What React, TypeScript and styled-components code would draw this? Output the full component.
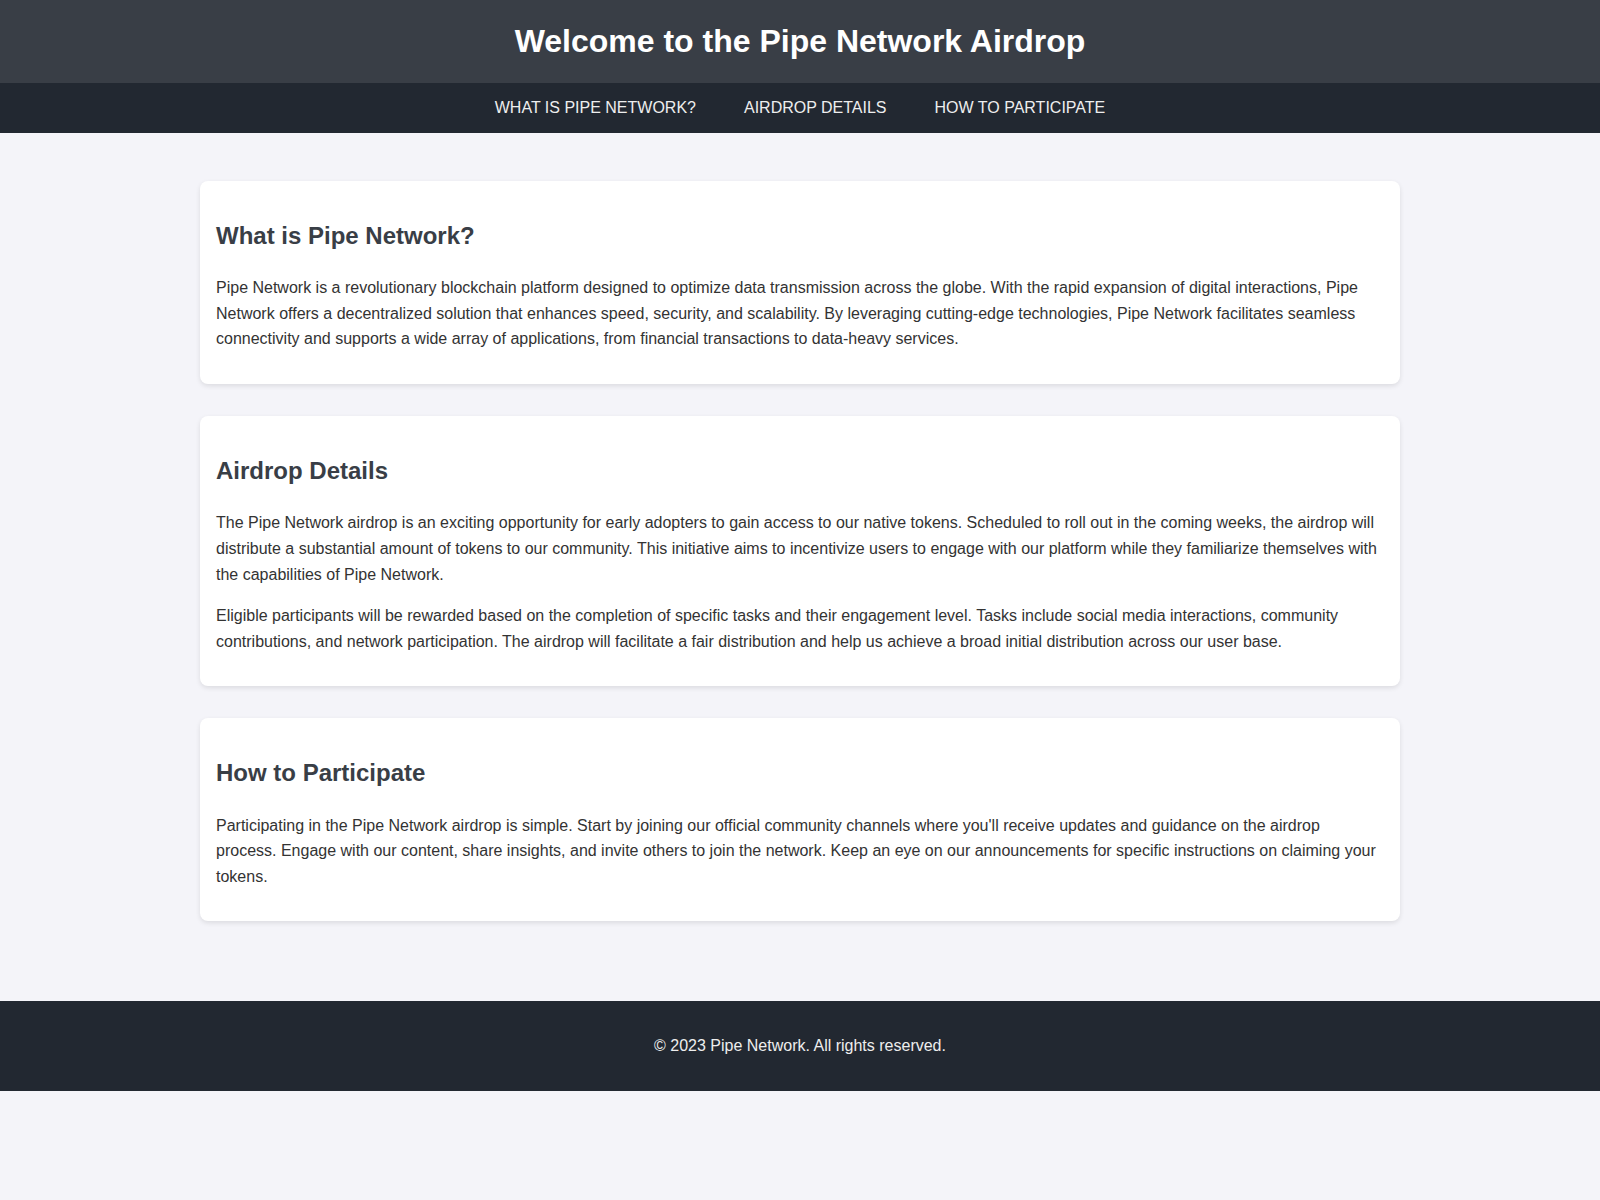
import React from "react";
import styled, { createGlobalStyle } from "styled-components";

const Global = createGlobalStyle`
  html, body {
    margin: 0;
    padding: 0;
    background: #f4f4f9;
    font-family: Arial, "Liberation Sans", Helvetica, sans-serif;
    line-height: 1.6;
    color: #333;
  }
  * { box-sizing: border-box; }
`;

const Header = styled.header`
  background: #393e46;
  color: #fff;
  padding: 16px 0;
  text-align: center;
`;

const Title = styled.h1`
  margin: 0;
  font-size: 32px;
  font-weight: bold;
  line-height: 1.6;
`;

const Nav = styled.nav`
  background: #222831;
  padding: 12px 0;
  display: flex;
  justify-content: center;
  gap: 48px;
`;

const NavLink = styled.a`
  color: #eeeeee;
  text-decoration: none;
  text-transform: uppercase;
  font-size: 16px;
  line-height: 25.6px;
`;

const Main = styled.main`
  max-width: 1200px;
  margin: 0 auto;
  padding: 48px 0 80px;
  display: flex;
  flex-direction: column;
  gap: 32px;
`;

const Card = styled.section`
  background: #fff;
  border-radius: 8px;
  padding: 16px;
  box-shadow: 0 2px 5px rgba(0, 0, 0, 0.1);
`;

const CardTitle = styled.h2`
  margin: 20px 0 20px;
  font-size: 24px;
  line-height: 1.6;
  color: #393e46;
`;

const Para = styled.p`
  margin: 16px 0;
  font-size: 16px;
  color: #333;
`;

const Footer = styled.footer`
  background: #222831;
  color: #eeeeee;
  text-align: center;
  padding: 32px 0;
  font-size: 16px;
`;

const sections = [
  {
    id: "what",
    title: "What is Pipe Network?",
    paras: [
      "Pipe Network is a revolutionary blockchain platform designed to optimize data transmission across the globe. With the rapid expansion of digital interactions, Pipe Network offers a decentralized solution that enhances speed, security, and scalability. By leveraging cutting-edge technologies, Pipe Network facilitates seamless connectivity and supports a wide array of applications, from financial transactions to data-heavy services.",
    ],
  },
  {
    id: "airdrop",
    title: "Airdrop Details",
    paras: [
      "The Pipe Network airdrop is an exciting opportunity for early adopters to gain access to our native tokens. Scheduled to roll out in the coming weeks, the airdrop will distribute a substantial amount of tokens to our community. This initiative aims to incentivize users to engage with our platform while they familiarize themselves with the capabilities of Pipe Network.",
      "Eligible participants will be rewarded based on the completion of specific tasks and their engagement level. Tasks include social media interactions, community contributions, and network participation. The airdrop will facilitate a fair distribution and help us achieve a broad initial distribution across our user base.",
    ],
  },
  {
    id: "participate",
    title: "How to Participate",
    paras: [
      "Participating in the Pipe Network airdrop is simple. Start by joining our official community channels where you'll receive updates and guidance on the airdrop process. Engage with our content, share insights, and invite others to join the network. Keep an eye on our announcements for specific instructions on claiming your tokens.",
    ],
  },
];

export default function App() {
  return (
    <>
      <Global />
      <Header>
        <Title>Welcome to the Pipe Network Airdrop</Title>
      </Header>
      <Nav>
        <NavLink href="#what">What is Pipe Network?</NavLink>
        <NavLink href="#airdrop">Airdrop Details</NavLink>
        <NavLink href="#participate">How to Participate</NavLink>
      </Nav>
      <Main>
        {sections.map((s) => (
          <Card key={s.id} id={s.id}>
            <CardTitle>{s.title}</CardTitle>
            {s.paras.map((p, i) => (
              <Para key={i}>{p}</Para>
            ))}
          </Card>
        ))}
      </Main>
      <Footer>© 2023 Pipe Network. All rights reserved.</Footer>
    </>
  );
}
